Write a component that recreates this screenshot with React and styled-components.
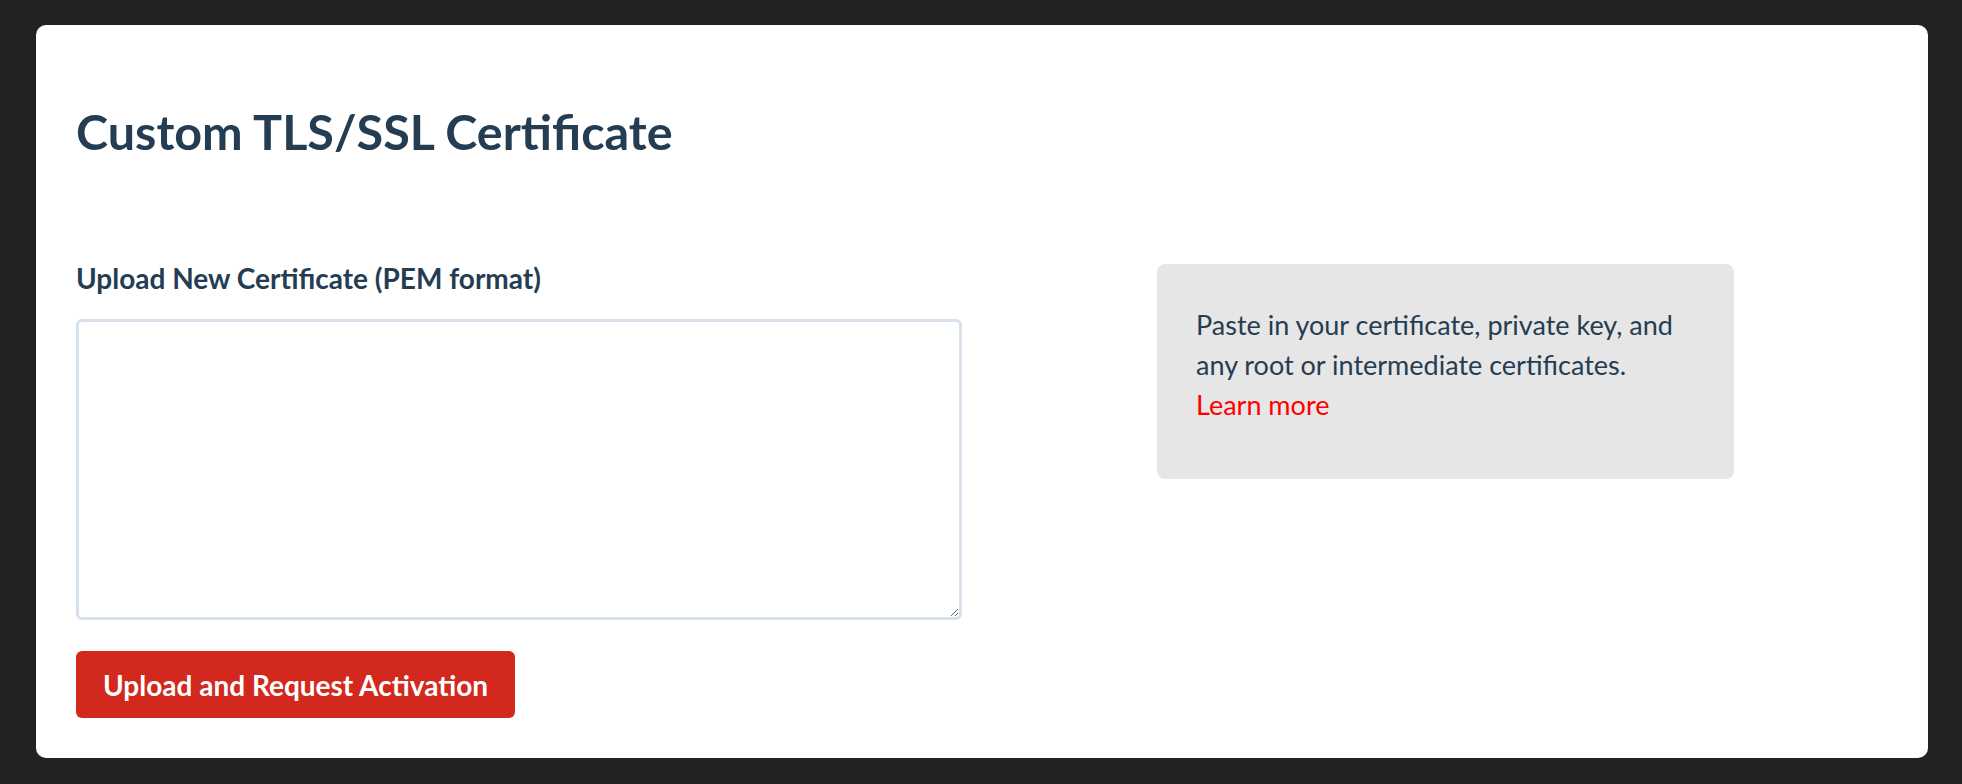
import React from "react";
import styled, {createGlobalStyle} from "styled-components";

const GlobalStyle = createGlobalStyle`
  html, body {
    margin: 0;
    padding: 0;
    background: #222222;
  }

  body {
    font-family: Lato, "Noto Sans", sans-serif;
  }
`;

const Page = styled.div`
  padding: 25px 34px 26px 36px;
`;

const Card = styled.section`
  background: #ffffff;
  border-radius: 10px;
  padding: 40px 40px 41px 40px;
  height: 733px;
  box-sizing: border-box;
`;

const Title = styled.h1`
  margin: 37px 0 0 0;
  font-size: 48.5px;
  line-height: 1.2;
  font-weight: 700;
  color: #253d52;
`;

const Columns = styled.div`
  display: flex;
  align-items: flex-start;
  gap: 195px;
  margin-top: 104px;
`;

const FormColumn = styled.div`
  display: flex;
  flex-direction: column;
  width: 886px;
`;

const Label = styled.label`
  font-size: 28px;
  line-height: 1;
  font-weight: 700;
  color: #253d52;
`;

const CertInput = styled.textarea`
  margin-top: 27px;
  height: 301px;
  box-sizing: border-box;
  border: 3px solid #d7e1ec;
  border-radius: 6px;
  font-family: "Liberation Mono", monospace;
  font-size: 16px;
  padding: 10px;
  outline: none;
`;

const SubmitButton = styled.button`
  align-self: flex-start;
  margin-top: 31px;
  height: 67px;
  padding: 0 27px;
  border: none;
  border-radius: 6px;
  background: #d3281e;
  color: #ffffff;
  font-family: Lato, "Noto Sans", sans-serif;
  font-size: 28px;
  font-weight: 700;
  cursor: pointer;
`;

const InfoBox = styled.aside`
  width: 577px;
  height: 215px;
  box-sizing: border-box;
  padding: 41px 38px 0 39px;
  background: #e6e6e6;
  border-radius: 8px;
  font-size: 27px;
  line-height: 40px;
  color: #253d52;
`;

const LearnMore = styled.a`
  display: block;
  color: #ff0000;
  text-decoration: none;
`;

export default function App() {
    return (
        <Page>
            <GlobalStyle/>
            <Card>
                <Title>Custom TLS/SSL Certificate</Title>
                <Columns>
                    <FormColumn>
                        <Label htmlFor="cert">Upload New Certificate (PEM format)</Label>
                        <CertInput id="cert"/>
                        <SubmitButton>Upload and Request Activation</SubmitButton>
                    </FormColumn>
                    <InfoBox>
                        Paste in your certificate, private key, and any root or intermediate certificates.
                        <LearnMore href="#">Learn more</LearnMore>
                    </InfoBox>
                </Columns>
            </Card>
        </Page>
    );
}
